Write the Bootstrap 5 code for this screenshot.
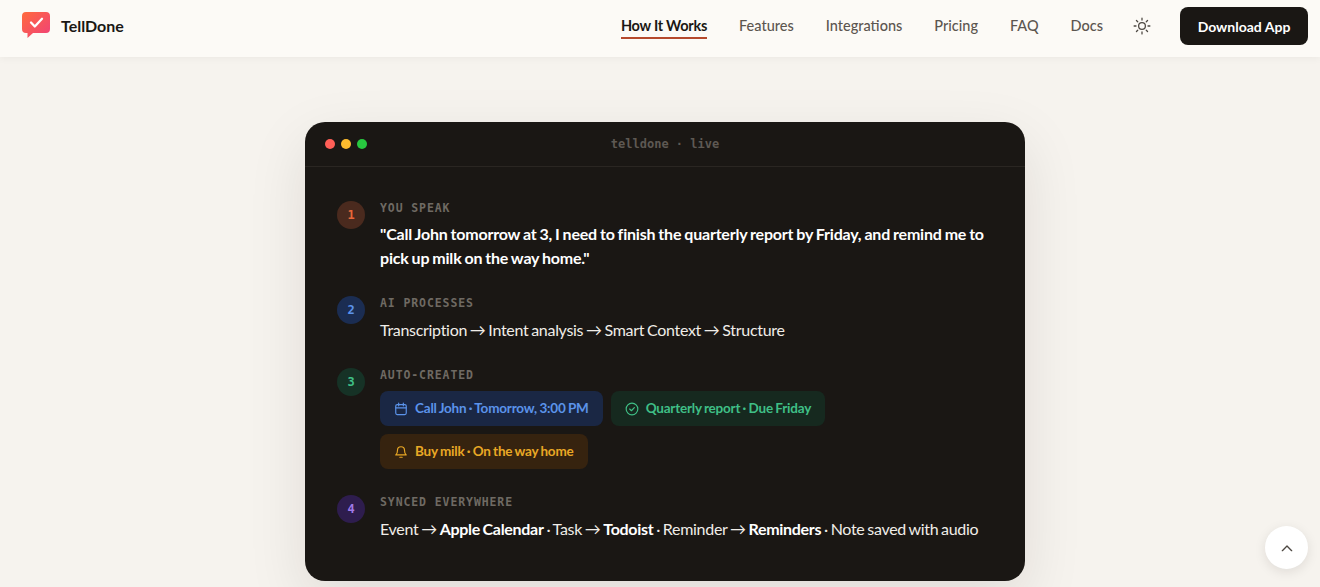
<!doctype html>
<html lang="en"><head><meta charset="utf-8"><title>TellDone</title>
<link rel="stylesheet" href="https://cdn.jsdelivr.net/npm/bootstrap@5.3.0/dist/css/bootstrap.min.css">
<style>
html,body{height:587px;overflow:hidden}
body{background:#f6f3ee;font-family:"Lato","Liberation Sans",sans-serif;color:#1a1714}
.topbar{height:57px;background:#fcfaf6;box-shadow:0 1px 8px rgba(26,23,20,.05);padding:0 12px 5px 22px}
.brandname{font-size:16px;font-weight:700;color:#1a1714;margin-left:10px}
.navlinks{gap:32px;margin-right:30px}
.navitem{font-size:14.500px;font-weight:500;color:#5c5650;text-decoration:none;line-height:20px;padding:3px 0 1px;border-bottom:2px solid transparent}
.navitem.sel{color:#1a1714;font-weight:700;border-bottom-color:#b5492c;letter-spacing:-.25px}
.sunbtn{margin-right:29px;line-height:0}
.dlbtn{width:128px;height:38px;background:#1a1714;color:#fff;font-size:14px;font-weight:700;border-radius:8px;border:0;padding:0}
.stage{padding-top:65px;padding-left:10px}
.termcard{width:720px;height:459px;background:#1a1714;border-radius:20px;box-shadow:0 20px 60px rgba(26,23,20,.10);overflow:hidden}
.termhead{height:45px;border-bottom:1px solid #2a2622;padding:0 20px}
.dotrow{gap:6px}
.tdot{width:10px;height:10px;border-radius:50%}
.dotred{background:#ff5f57}.dotamber{background:#febc2e}.dotgreen{background:#28c840}
.termtitle{font-family:"DejaVu Sans Mono","Liberation Mono",monospace;font-size:12px;color:#5e5953;font-weight:700}
.termbody{padding:34px 32px 0}
.stepline{gap:15px}
.stepnum{flex:0 0 28px;width:28px;height:28px;border-radius:50%;font-family:"DejaVu Sans Mono",monospace;font-size:12px;font-weight:700}
.stepa .stepnum{background:#4a2a1e;color:#e8673a}
.stepb .stepnum{background:#1b2d52;color:#5b93ea}
.stepc .stepnum{background:#163226;color:#3fbf86}
.stepd .stepnum{background:#2e1d4e;color:#a07ae8}
.steplabel{font-family:"DejaVu Sans Mono","Liberation Mono",monospace;font-size:11.500px;font-weight:700;letter-spacing:.9px;color:#6f6a63;line-height:14px;text-transform:uppercase}
.stepcopy{font-size:16px;color:#f0ede8;line-height:24px;margin-top:8px;letter-spacing:-.3px;word-spacing:-1px}
.stepcopy b{color:#fff;font-weight:700}
.stepa .stepcopy{font-weight:700;color:#fff;margin-top:7px;margin-bottom:0;letter-spacing:-.2px;word-spacing:-.7px}
.stepb{margin-top:26px}.stepc{margin-top:26px}.stepd{margin-top:26px}
.chipset{gap:8px;margin-top:9px}
.chip{height:35px;border-radius:8px;padding:0 14px;font-size:13.500px;font-weight:700;gap:7px;white-space:nowrap;letter-spacing:-.2px;word-spacing:-.7px}
.chipblue{background:#1a2744;color:#5b93ea}
.chipgreen{background:#16291f;color:#3fbf86}
.chipamber{background:#36230f;color:#e9a825}
.upbtn{position:fixed;right:12px;bottom:18px;width:43px;height:43px;border-radius:50%;background:#fff;border:0;padding:0;box-shadow:0 3px 12px rgba(26,23,20,.10)}
</style></head><body>
<nav class="topbar d-flex align-items-center justify-content-between">
 <div class="d-flex align-items-center">
  <svg width="29" height="28" viewBox="0 0 29 28"><defs><linearGradient id="lg" x1="0" y1="0" x2="1" y2="1"><stop offset="0" stop-color="#ff6a3d"/><stop offset="1" stop-color="#f0407a"/></linearGradient></defs><path d="M4 0H24A4 4 0 0 1 28 4V17A4 4 0 0 1 24 21H11L5.500 26L5.500 21H4A4 4 0 0 1 0 17V4A4 4 0 0 1 4 0Z" fill="url(#lg)"/><path d="M9 10.500L12.800 14.500L20 6.800" fill="none" stroke="#fff" stroke-width="2.300" stroke-linecap="round" stroke-linejoin="round"/></svg>
  <span class="brandname">TellDone</span>
 </div>
 <div class="d-flex align-items-center">
  <div class="navlinks d-flex align-items-center">
   <a class="navitem sel" href="#">How It Works</a><a class="navitem" href="#">Features</a><a class="navitem" href="#">Integrations</a><a class="navitem" href="#">Pricing</a><a class="navitem" href="#">FAQ</a><a class="navitem" href="#">Docs</a>
  </div>
  <span class="sunbtn"><svg width="18" height="18" viewBox="0 0 24 24" fill="none" stroke="#4d4842" stroke-width="1.700" stroke-linecap="round"><circle cx="12" cy="12" r="4.500"/><path d="M12 1.500v2.500M12 20v2.500M1.500 12h2.500M20 12h2.500M4.600 4.600l1.700 1.700M17.700 17.700l1.700 1.700M4.600 19.400l1.700-1.700M17.700 6.300l1.700-1.700"/></svg></span>
  <button class="dlbtn" type="button">Download App</button>
 </div>
</nav>
<main class="stage d-flex justify-content-center">
 <section class="termcard">
  <div class="termhead d-flex align-items-center position-relative">
   <div class="dotrow d-flex me-auto"><span class="tdot dotred"></span><span class="tdot dotamber"></span><span class="tdot dotgreen"></span></div>
   <span class="termtitle position-absolute start-50 translate-middle-x">telldone · live</span>
  </div>
  <div class="termbody">
   <div class="stepline stepa d-flex"><div class="stepnum d-flex align-items-center justify-content-center">1</div><div><div class="steplabel">You speak</div><p class="stepcopy">"Call John tomorrow at 3, I need to finish the quarterly report by Friday, and remind me to pick up milk on the way home."</p></div></div>
   <div class="stepline stepb d-flex"><div class="stepnum d-flex align-items-center justify-content-center">2</div><div><div class="steplabel">AI processes</div><div class="stepcopy">Transcription → Intent analysis → Smart Context → Structure</div></div></div>
   <div class="stepline stepc d-flex"><div class="stepnum d-flex align-items-center justify-content-center">3</div><div><div class="steplabel">Auto-created</div>
    <div class="chipset d-flex flex-wrap">
     <span class="chip chipblue d-inline-flex align-items-center"><svg width="14" height="14" viewBox="0 0 24 24" fill="none" stroke="currentColor" stroke-width="2" stroke-linecap="round"><rect x="3" y="4.500" width="18" height="17" rx="2.500"/><path d="M3 10h18M8 2v4.500M16 2v4.500"/></svg>Call John · Tomorrow, 3:00 PM</span>
     <span class="chip chipgreen d-inline-flex align-items-center"><svg width="14" height="14" viewBox="0 0 24 24" fill="none" stroke="currentColor" stroke-width="2" stroke-linecap="round" stroke-linejoin="round"><circle cx="12" cy="12" r="10"/><path d="M8 12l3 3 5-5.500"/></svg>Quarterly report · Due Friday</span>
     <span class="chip chipamber d-inline-flex align-items-center"><svg width="14" height="14" viewBox="0 0 24 24" fill="none" stroke="currentColor" stroke-width="2" stroke-linecap="round" stroke-linejoin="round"><path d="M6 9a6 6 0 0 1 12 0c0 6 3 8 3 8H3s3-2 3-8Z"/><path d="M10 21h4"/></svg>Buy milk · On the way home</span>
    </div></div></div>
   <div class="stepline stepd d-flex"><div class="stepnum d-flex align-items-center justify-content-center">4</div><div><div class="steplabel">Synced everywhere</div><div class="stepcopy">Event → <b>Apple Calendar</b> · Task → <b>Todoist</b> · Reminder → <b>Reminders</b> · Note saved with audio</div></div></div>
  </div>
 </section>
</main>
<button class="upbtn d-flex align-items-center justify-content-center" type="button" aria-label="Back to top"><svg width="16" height="16" viewBox="0 0 24 24" fill="none" stroke="#4d4842" stroke-width="2" stroke-linecap="round" stroke-linejoin="round"><path d="M5 16l7-7 7 7"/></svg></button>
</body></html>
